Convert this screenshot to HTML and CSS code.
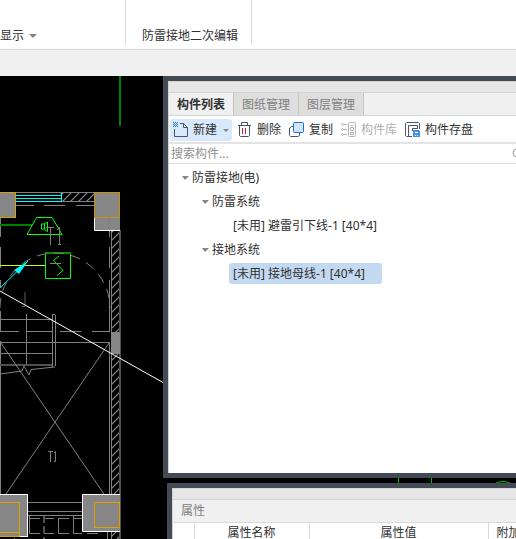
FILE: index.html
```html
<!DOCTYPE html>
<html lang="zh-CN">
<head>
  <meta charset="UTF-8" />
  <meta name="viewport" content="width=device-width, initial-scale=1.0"/>
  <title>构件列表</title>
  <link rel="stylesheet" href="styles.css">
</head>

<body>
  <!-- Ribbon -->
  <div class="ribbon">
    <div class="ribbon-group ribbon-show"><button type="button">显示<span class="caret"></span></button></div>
    <div class="ribbon-group ribbon-edit"><button type="button">防雷接地二次编辑</button></div>
  </div>
  <div class="strip"></div>

  <div class="workspace">
    <!-- Drawing -->
    <svg class="drawing" width="516" height="463" viewBox="0 76 516 463" fill="none" stroke="#808080">
      <defs>
        <pattern id="hatch" width="8" height="8" patternUnits="userSpaceOnUse">
          <path d="M-2 2L2 -2M-1 9L9 -1M6 10L10 6" stroke="#8c8c8c" stroke-width="1.2"/>
        </pattern>
      </defs>
      <path d="M120 76V126" stroke="#008000" stroke-width="2"/>
      <path d="M398.5 478V484M431.5 478V484M494 484Q503 479 512 484" stroke="#00c800"/>

      <!-- walls -->
      <rect x="62" y="193" width="32" height="8" fill="url(#hatch)" stroke="none"/>
      <rect x="112" y="230" width="8" height="309" fill="url(#hatch)" stroke="none"/>
      <path d="M16 192.5H95M62 201.5H95M111.5 230V539M109.5 218V237M109.5 247V268M109.5 280V332M109.5 342V495M0.5 218V237M0.5 247V268M0.5 280V287M0.5 311V331M0.5 341V495M16 205.5H34M44 205.5H65M76 205.5H94"/>
      <path d="M120 230V539" stroke="#505050" stroke-width="2"/>
      <path d="M16 195.5H61M16 198.5H61M16 201.5H61M61.5 193V202" stroke="#00ffff"/>
      <rect x="111" y="332" width="9" height="22" fill="#868686" stroke="none"/>

      <!-- upper columns -->
      <rect x="-5" y="192.5" width="20.5" height="25" fill="#868686" stroke="#d69c14"/>
      <rect x="94" y="218" width="26" height="12" fill="#868686" stroke="none"/>
      <path d="M94.5 218V230.5H120" stroke="#fff"/>
      <path d="M109.5 218V230"/>
      <rect x="94.5" y="192.5" width="25" height="25" fill="#868686" stroke="#c8900c"/>

      <!-- speaker and detector -->
      <path d="M0 225H32" stroke="#008000" stroke-width="2"/>
      <path d="M36.5 217.5H52L62 234.5H27ZM41.5 224V229H44L47.5 231.5V222L44 224ZM44.5 224V229" stroke="#00ff00"/>
      <path d="M46 227.5H54M50.5 227V245M57 230L59.5 227V245M58 244.5H61"/>
      <path d="M45.5 252V278.5H70.5V252M59 256L53.5 260.5L63 270.5L57 275.5" stroke="#00ff00"/>
      <path d="M45 253H71" stroke="#009000" stroke-width="2"/>
      <path d="M50 263.5H61"/>
      <path d="M0 265.5H45" stroke="#c8ff00"/>
      <path d="M0 288L28 261" stroke="#00ffff"/>
      <path d="M28 261L14 270L19 274Z" fill="#00ffff" stroke="none"/>
      <path d="M0 308A55 55 0 0 1 110 308" stroke-dasharray="10 7"/>

      <!-- stairs -->
      <path d="M25 292V306M22 306.5H25" stroke="#606060"/>
      <path d="M0 319.5H52M0 331.5H19M26 331.5H52M60 331.5H81M92 331.5H110M0 342.5H109M0 353.5H52M26.5 314V366M52.5 314V367M55.5 315V366M52 314.5H55M0 374L22 371L24 366L29 375L31 369.5L55 367"/>
      <path d="M0 365H52" stroke="#505050" stroke-width="2"/>
      <path d="M1 343L104 494M109 343L6 494M48 451.5H53M50.5 452V462M54 453L55.5 451.5V461.5H54"/>
      <path d="M0 291L163 382.5" stroke="#fff"/>

      <!-- lower columns -->
      <path d="M28 502.5H82M28 511.5H82M28 515.5H82"/>
      <path d="M29.5 516V533.5H40M29 518.5H40M44 518.5H54M54 533.5H44M69 518.5H58.5V533.5H69M73.5 516V533.5H82M73 518.5H82M87 533.5H98M14.5 538V539M107.5 532V539"/>
      <path d="M44 516V523M44 526V533M44 537V539" stroke="#505050" stroke-width="2"/>
      <rect x="-5" y="494.5" width="32.5" height="42" fill="#868686" stroke="#fff"/>
      <path d="M0 502.5H19.5V536.5H0M0 532.5H19" stroke="#e0a000"/>
      <path d="M82.5 531.5V494.5H120M82.5 531.5H120" fill="#868686" stroke="#fff"/>
      <rect x="83" y="495" width="37" height="36" fill="#868686" stroke="none"/>
      <rect x="94.5" y="502.5" width="25" height="25" stroke="#e0a000"/>
    </svg>

    <!-- Component list -->
    <div class="panel list-panel">
      <div class="grip"></div>
      <div class="tabs">
        <button type="button" class="tab active">构件列表</button>
        <button type="button" class="tab">图纸管理</button>
        <button type="button" class="tab">图层管理</button>
      </div>
      <div class="toolbar">
        <button type="button" class="tool tool-new">
          <svg width="16" height="16" fill="none" stroke="#4a5468">
            <path d="M1.5 7V14.5H14.5V5.5L10.5 1.5H7M10.5 1.5V5.5H14.5"/>
            <path d="M0 .5H5M0 2.5H5M0 4.5H5" stroke="#2673e0" stroke-dasharray="1 1"/>
            <path d="M1 1.5H4M1 3.5H4" stroke="#2673e0" stroke-dasharray="1 1"/>
          </svg>
          新建<span class="caret"></span>
        </button>
        <button type="button" class="tool">
          <svg width="16" height="16" fill="none" stroke="#4a5468">
            <path d="M1 3.5H14M4.5 3V.5H10.5V3M2.5 4V13.5L3.5 14.5H11.5L12.5 13.5V4"/>
            <path d="M5.5 6V12M8.5 6V12" stroke="#d8202c"/>
          </svg>
          删除
        </button>
        <button type="button" class="tool">
          <svg width="16" height="16" fill="none">
            <path d="M4 4.5H2.5L.5 6V13.5L1.5 14.5H9L10.5 13.5V11" stroke="#4a5468"/>
            <rect x="4.5" y=".5" width="10" height="10" rx="1" fill="#d2e5fb" stroke="#1a6fe0"/>
          </svg>
          复制
        </button>
        <button type="button" class="tool" disabled>
          <svg width="16" height="16" fill="none" stroke="#b5b5b5">
            <path d="M3 2.5H6M3 7.5H6M3 12.5H6"/>
            <circle cx="1.5" cy="2.5" r="1"/><circle cx="1.5" cy="7.5" r="1"/><circle cx="1.5" cy="12.5" r="1"/>
            <rect x="7.5" y=".5" width="7" height="14" rx="1"/>
            <path d="M9.5 3.5H12.5M9.5 5.5H12.5V8.5H9.5ZM9.5 10.5H12.5V12.5H9.5Z"/>
          </svg>
          构件库
        </button>
        <button type="button" class="tool">
          <svg width="16" height="16" fill="none" stroke="#4a5468">
            <path d="M7 14.5H1.5L.5 13.5V1.5L1.5 .5H13.5L14.5 1.5V7M3.5 14V3.5H12.5V6.5H7.5V9"/>
            <path d="M8 8H14L15 9V15H8Z" fill="#4a90e8" stroke="none"/>
            <path d="M10 10.5H13M10 13.5H11M12 13.5H13" stroke="#fff"/>
          </svg>
          构件存盘
        </button>
      </div>
      <div class="search">
        <input type="text" aria-label="搜索构件" placeholder="搜索构件...">
        <svg width="12" height="12" fill="none" stroke="#999"><circle cx="5" cy="5" r="4"/><path d="M8 8L11 11"/></svg>
      </div>
      <ul class="tree">
        <li>
          <span class="node"><span class="caret"></span>防雷接地(电)</span>
          <ul>
            <li>
              <span class="node"><span class="caret"></span>防雷系统</span>
              <ul>
                <li><span class="leaf">[未用] 避雷引下线-1 [40*4]</span></li>
              </ul>
            </li>
            <li>
              <span class="node"><span class="caret"></span>接地系统</span>
              <ul>
                <li><span class="leaf selected">[未用] 接地母线-1 [40*4]</span></li>
              </ul>
            </li>
          </ul>
        </li>
      </ul>
    </div>

    <!-- Properties -->
    <div class="panel props-panel">
      <div class="grip"></div>
      <h2>属性</h2>
      <table>
        <colgroup><col class="col-no"><col class="col-name"><col class="col-value"><col></colgroup>
        <tr><th></th><th>属性名称</th><th>属性值</th><th>附加</th></tr>
      </table>
    </div>
  </div>
</body>
</html>
```
FILE: styles.css
```css
* {
  box-sizing: border-box;
}

body {
  margin: 0;
  height: 100vh;
  display: flex;
  flex-direction: column;
  overflow: hidden;
  background: #f0f0f0;
  color: #303030;
  font-family: "Noto Sans", "Noto Sans CJK SC", sans-serif;
  font-size: 12px;
  line-height: 20px;
}

button {
  padding: 0;
  border: none;
  background: none;
  color: inherit;
  font: inherit;
  white-space: nowrap;
}

ul {
  list-style: none;
  margin: 0;
  padding: 0;
}

.caret {
  display: inline-block;
  border: 4px solid transparent;
  border-top-color: #858585;
  border-bottom: none;
}

/* Ribbon */
.ribbon {
  flex: none;
  display: flex;
  height: 50px;
  padding-bottom: 4px;
  background: #fff;
  border-bottom: 1px solid #d9d9d9;
}

.ribbon-group {
  display: flex;
  align-items: flex-end;
  border-right: 1px solid #d9d9d9;
}

.ribbon-group button {
  line-height: 18px;
}

.ribbon-show {
  width: 126px;
}

.ribbon-show button {
  display: flex;
  align-items: center;
  gap: 5px;
}

.ribbon-edit {
  width: 126px;
  justify-content: center;
  padding-left: 3px;
}

.strip {
  flex: none;
  height: 26px;
}

/* Workspace */
.workspace {
  position: relative;
  flex: 1;
  min-height: 0;
  display: flex;
  flex-direction: column;
  gap: 5px;
  padding-left: 163px;
  overflow: hidden;
  background: #000;
}

.drawing {
  position: absolute;
  top: 0;
  left: 0;
}

.panel {
  position: relative;
  margin-right: -16px;
  padding-left: 1px;
  border: 5px solid #434a54;
  background: linear-gradient(to right, #d4d4d4 1px, #fff 1px);
}

.grip {
  height: 12px;
  background: #e6e6e6;
  border: 1px solid #d4d4d4;
  border-left: none;
}

.list-panel {
  flex: 1;
  min-height: 0;
}

.tabs {
  display: flex;
  height: 23px;
  background: #f0f0f0;
  border-bottom: 1px solid #d4d4d4;
}

.tab {
  padding: 2px 8px 0;
  background: #dedede;
  border-right: 1px solid #c4c4c4;
  color: #808080;
}

.tab.active {
  background: #f0f0f0;
  color: #303030;
  font-weight: bold;
}

.toolbar {
  display: flex;
  align-items: center;
  gap: 8px;
  height: 28px;
  padding: 2px 0 0 1px;
  border-bottom: 2px solid #e4e4e4;
}

.tool {
  display: flex;
  align-items: center;
  gap: 4px;
  height: 22px;
}

.tool-new {
  margin-right: -3px;
  padding: 0 3px;
  background: #d9e9fc;
  border-radius: 3px;
}

.tool-new .caret {
  border-width: 3px;
  border-bottom: none;
  margin-left: 2px;
}

.tool:disabled {
  color: #b0b0b0;
}

.search {
  display: flex;
  align-items: center;
  height: 20px;
  border-bottom: 1px solid #e0e0e0;
}

.search input {
  flex: 1;
  min-width: 0;
  height: 19px;
  padding: 0 2px;
  border: none;
  outline: none;
  font: inherit;
}

.search input::placeholder {
  color: #909090;
}

.search svg {
  margin-right: 3px;
}

/* Tree */
.tree {
  padding: 2px 0 0 13px;
}

.tree ul {
  padding-left: 20px;
}

.tree ul ul {
  padding-left: 27px;
}

.tree li {
  line-height: 24px;
}

.node {
  display: flex;
  align-items: center;
  gap: 3px;
  height: 24px;
}

.node .caret {
  border-width: 4px 4px 0 3px;
}

.tree .leaf {
  display: block;
  width: 153px;
  height: 21px;
  margin: 1px 0 2px;
  padding-left: 4px;
  border-radius: 3px;
  line-height: 21px;
  white-space: nowrap;
}

.leaf.selected {
  background: #c3d9f1;
}

/* Properties */
.props-panel {
  flex: none;
  height: 56px;
  margin-left: 4px;
  border-bottom: none;
  overflow: hidden;
}

.props-panel h2 {
  height: 22px;
  margin: 0;
  padding-left: 8px;
  background: #f0f0f0;
  color: #808080;
  font-size: 12px;
  font-weight: normal;
  line-height: 22px;
}

.props-panel table {
  width: 100%;
  table-layout: fixed;
  border-collapse: collapse;
}

.props-panel th {
  height: 20px;
  padding: 0;
  border: 1px solid #d9d9d9;
  border-left: none;
  font-weight: normal;
  line-height: 18px;
}

.props-panel th:last-child {
  padding-left: 8px;
  text-align: left;
}

.col-no {
  width: 21px;
}

.col-name {
  width: 115px;
}

.col-value {
  width: 179px;
}
```
